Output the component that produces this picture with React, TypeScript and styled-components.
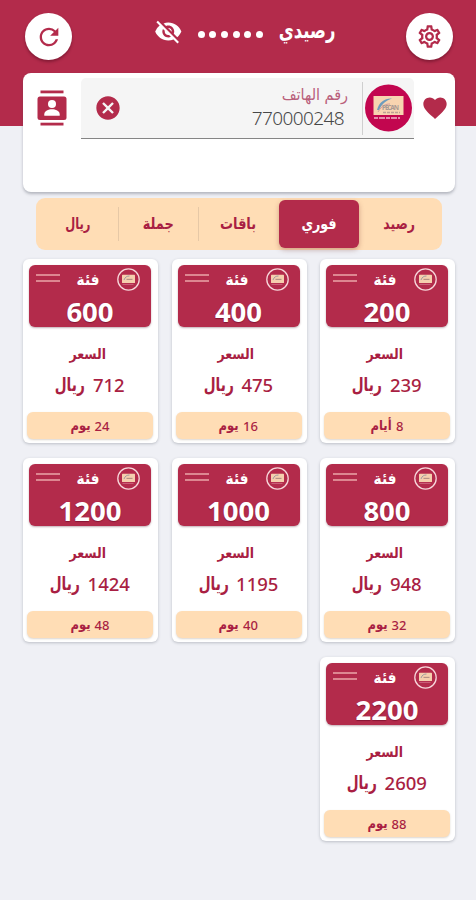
import React from "react";
import styled, { createGlobalStyle } from "styled-components";
import {
  MdRefresh,
  MdVisibilityOff,
  MdOutlineSettings,
  MdFavorite,
  MdCancel,
} from "react-icons/md";

const crimson = "#b32b4b";
const ink = "#a91f43";
const peach = "#ffddb5";
const sans = `"Noto Sans", "DejaVu Sans Condensed", "DejaVu Sans", sans-serif`;

const Global = createGlobalStyle`
  * { box-sizing: border-box; }
  body { margin: 0; background: #eff0f5; font-family: ${sans}; }
`;

const Screen = styled.main`
  width: 476px;
  height: 900px;
  direction: rtl;
  overflow: hidden;
  background: linear-gradient(${crimson} 126px, #eff0f5 126px);
`;

const Header = styled.header`
  height: 73px;
  padding: 13px 23px 0 25px;
  display: flex;
  justify-content: space-between;
  align-items: flex-start;
`;

const RoundButton = styled.button`
  width: 47px;
  height: 47px;
  padding: 0;
  border: 0;
  border-radius: 50%;
  display: grid;
  place-items: center;
  color: ${crimson};
  background: #fff;
  box-shadow: 0 2px 3px rgba(60, 0, 20, 0.4);
`;

const Balance = styled.div`
  width: 182px;
  height: 36px;
  margin-left: 12px;
  display: flex;
  align-items: center;
  color: #fff;
`;

const Word = styled.span<{ $size: number; $bold?: boolean; $stretch?: number }>`
  display: inline-block;
  font-family: "DejaVu Sans Condensed", "DejaVu Sans", sans-serif;
  font-size: ${(p) => p.$size}px;
  font-weight: ${(p) => (p.$bold ? 700 : 400)};
  line-height: 1;
  white-space: nowrap;
  transform: scaleX(${(p) => p.$stretch ?? 1});
`;

const TitleSlot = styled.div`
  width: 57px;
  display: flex;
  justify-content: center;
`;

const Dots = styled.div`
  display: flex;
  gap: 4.7px;
  margin: 6px 16px 0 15px;
`;

const Dot = styled.i`
  width: 7px;
  height: 7px;
  border-radius: 50%;
  background: #fff;
`;

const Panel = styled.section`
  height: 119px;
  margin: 0 21px 0 23px;
  padding: 5px 0 0 14px;
  display: flex;
  align-items: flex-start;
  border-radius: 8px;
  color: ${crimson};
  background: #fff;
  box-shadow: 0 2px 3px rgba(70, 75, 90, 0.35);
`;

const HeartSlot = styled.div`
  width: 41px;
  height: 60px;
  display: grid;
  place-items: center;
`;

const Field = styled.div`
  width: 333px;
  height: 61px;
  display: flex;
  align-items: center;
  padding: 0 2px 0 13px;
  border-bottom: 1px solid #858585;
  border-radius: 5px 5px 0 0;
  background: #f5f5f5;
`;

const FieldText = styled.div`
  flex: 1;
  height: 53px;
  margin-right: 2px;
  padding: 5px 14px 0 0;
  border-right: 1px solid #cfcfcf;
`;

const FieldLabel = styled.div`
  height: 18px;
  display: flex;
  color: #b9607b;
`;

const Phone = styled.div`
  direction: ltr;
  text-align: right;
  padding-right: 4px;
  font-size: 19px;
  font-weight: 300;
  line-height: 26px;
  letter-spacing: -0.6px;
  color: #484848;
`;

const ContactSlot = styled.div`
  width: 44px;
  height: 60px;
  display: flex;
  align-items: center;
  justify-content: flex-end;
`;

const Tabs = styled.nav`
  height: 52px;
  margin: 6px 34px 0 36px;
  padding: 2px 3px 2px 2px;
  display: grid;
  grid-template-columns: repeat(5, 1fr);
  border-radius: 9px;
  background: ${peach};
`;

const Tab = styled.button<{ $active?: boolean; $divided?: boolean }>`
  padding: 0 0 1px;
  border: 0;
  color: ${(p) => (p.$active ? "#fff" : ink)};
  background: ${(p) => {
    if (p.$active) return crimson;
    return p.$divided
      ? "linear-gradient(#e6c8a6, #e6c8a6) left 7px / 1px 34px no-repeat"
      : "none";
  }};
  border-radius: ${(p) => (p.$active ? "6px" : "0")};
  box-shadow: ${(p) => (p.$active ? "0 2px 5px rgba(120, 50, 40, 0.35)" : "none")};
`;

const Grid = styled.section`
  margin: 9px 21px 0 23px;
  display: grid;
  grid-template-columns: repeat(3, 135px);
  justify-content: space-between;
  gap: 15px 0;
`;

const Card = styled.article`
  height: 184px;
  padding: 6px 4px 4px;
  display: flex;
  flex-direction: column;
  border-radius: 6px;
  color: ${ink};
  background: #fff;
  box-shadow: 0 1px 3px rgba(70, 75, 90, 0.3);
`;

const Banner = styled.div`
  height: 62px;
  margin: 0 3px 0 2px;
  border-radius: 6px;
  color: #fff;
  background: ${crimson};
  box-shadow: 0 1px 2px rgba(80, 20, 40, 0.35);
`;

const BannerTop = styled.div`
  height: 29px;
  padding: 0 11px 0 7px;
  display: flex;
  align-items: center;
  justify-content: space-between;
`;

const Stripes = styled.div`
  width: 24px;
  height: 8px;
  margin-bottom: 3px;
  border: solid #dd8791;
  border-width: 2px 0;
`;

const Amount = styled.div`
  text-align: center;
  font-size: 27.5px;
  font-weight: 700;
  line-height: 36px;
  text-shadow: 0 1px 1px rgba(90, 0, 30, 0.5);
`;

const Caption = styled.div`
  height: 20px;
  margin: 17px 6px 0 0;
  display: flex;
  justify-content: center;
  align-items: center;
`;

const Price = styled.div`
  height: 30px;
  margin: 5px 5px 0 0;
  display: flex;
  align-items: center;
  justify-content: center;
  gap: 4px;
  font-size: 18.5px;
  font-weight: 500;
`;

const Duration = styled.footer`
  height: 27px;
  margin: auto 1px 0 0;
  padding-right: 1px;
  display: flex;
  align-items: center;
  justify-content: center;
  gap: 4px;
  border-radius: 6px;
  font-size: 13px;
  font-weight: 500;
  background: ${peach};
  box-shadow: 0 1px 2px rgba(120, 90, 60, 0.25);
`;

const ContactsIcon = () => (
  <svg width="30" height="36" viewBox="0 0 30 36" fill={crimson}>
    <rect x="3.5" y="0.5" width="23" height="2.8" />
    <rect x="3.5" y="32.7" width="23" height="2.8" />
    <rect x="0.5" y="6.5" width="29" height="23.5" rx="2.5" />
    <circle cx="15" cy="14" r="4" fill="#fff" />
    <path d="M7.3 25.8v-1.6c0-3.4 4.2-5 7.7-5s7.7 1.6 7.7 5v1.6z" fill="#fff" />
  </svg>
);

const LogoText = styled.text`
  font-family: ${sans};
  font-weight: 700;
  direction: ltr;
`;

const Logo = () => (
  <svg width="47" height="48" viewBox="0 0 47 48">
    <circle cx="23.5" cy="24" r="23.5" fill="#c2064f" />
    <rect x="8.5" y="12" width="30" height="19" fill="#f8d4b0" />
    <path d="M12 26C14 18 20 14 27 14.5C20 17 17 20 14 26z" fill="#6d9cbd" />
    <path d="M13 28C17 21 21 20 25 20" fill="none" stroke="#d09da0" />
    <LogoText x="17" y="25.5" fontSize="6.5" fill="#a99a94" textLength="17">PECAN</LogoText>
    <path d="M18 28.5h17" stroke="#bda095" strokeWidth="1.5" strokeDasharray="3 1" />
    <path d="M9 34h26" stroke="#f1b9c7" strokeWidth="1.6" strokeDasharray="4 1 6 1" />
  </svg>
);

const CardBadge = () => (
  <svg width="23" height="23" viewBox="0 0 23 23">
    <circle cx="11.5" cy="11.5" r="10.7" fill="none" stroke="#f7d5d9" strokeWidth="1.3" />
    <rect x="5" y="6.8" width="13" height="8.2" rx="0.6" fill="#f5cfae" />
    <path d="M7 12C8 9 10 8 12.5 8" fill="none" stroke="#9d9aa0" />
    <path d="M9.5 11.4h6" stroke="#b59285" strokeWidth="1.2" />
    <path d="M5.5 16.4h11" stroke="#d77c92" strokeWidth="0.7" />
  </svg>
);

const tabs = [
  { label: "رصيد", stretch: 0.87 },
  { label: "فوري", stretch: 0.88, active: true },
  { label: "باقات", stretch: 0.9, divided: true },
  { label: "جملة", stretch: 0.9, divided: true },
  { label: "ريال", stretch: 0.8 },
];

const plans = [
  { amount: 200, price: 239, days: 8, unit: "أيام" },
  { amount: 400, price: 475, days: 16, unit: "يوم" },
  { amount: 600, price: 712, days: 24, unit: "يوم" },
  { amount: 800, price: 948, days: 32, unit: "يوم" },
  { amount: 1000, price: 1195, days: 40, unit: "يوم" },
  { amount: 1200, price: 1424, days: 48, unit: "يوم" },
  { amount: 2200, price: 2609, days: 88, unit: "يوم" },
];

export default function App() {
  return (
    <Screen>
      <Global />
      <Header>
        <RoundButton><MdOutlineSettings size={27} /></RoundButton>
        <Balance>
          <TitleSlot><Word $size={22} $bold $stretch={0.83}>رصيدي</Word></TitleSlot>
          <Dots>{Array.from({ length: 6 }, (_, i) => <Dot key={i} />)}</Dots>
          <MdVisibilityOff size={29} />
        </Balance>
        <RoundButton><MdRefresh size={28} /></RoundButton>
      </Header>
      <Panel>
        <HeartSlot><MdFavorite size={28} /></HeartSlot>
        <Field>
          <Logo />
          <FieldText>
            <FieldLabel><Word $size={16}>رقم الهاتف</Word></FieldLabel>
            <Phone>770000248</Phone>
          </FieldText>
          <MdCancel size={28} />
        </Field>
        <ContactSlot><ContactsIcon /></ContactSlot>
      </Panel>
      <Tabs>
        {tabs.map((t) => (
          <Tab key={t.label} $active={t.active} $divided={t.divided}>
            <Word $size={16} $bold $stretch={t.stretch}>{t.label}</Word>
          </Tab>
        ))}
      </Tabs>
      <Grid>
        {plans.map((p) => (
          <Card key={p.amount}>
            <Banner>
              <BannerTop>
                <CardBadge />
                <Word $size={16} $bold $stretch={0.95}>فئة</Word>
                <Stripes />
              </BannerTop>
              <Amount>{p.amount}</Amount>
            </Banner>
            <Caption><Word $size={15} $bold $stretch={0.93}>السعر</Word></Caption>
            <Price>
              <span>{p.price}</span>
              <Word $size={19} $bold $stretch={0.8}>ريال</Word>
            </Price>
            <Duration>
              <span>{p.days}</span>
              <Word $size={13.5} $bold $stretch={0.95}>{p.unit}</Word>
            </Duration>
          </Card>
        ))}
      </Grid>
    </Screen>
  );
}
